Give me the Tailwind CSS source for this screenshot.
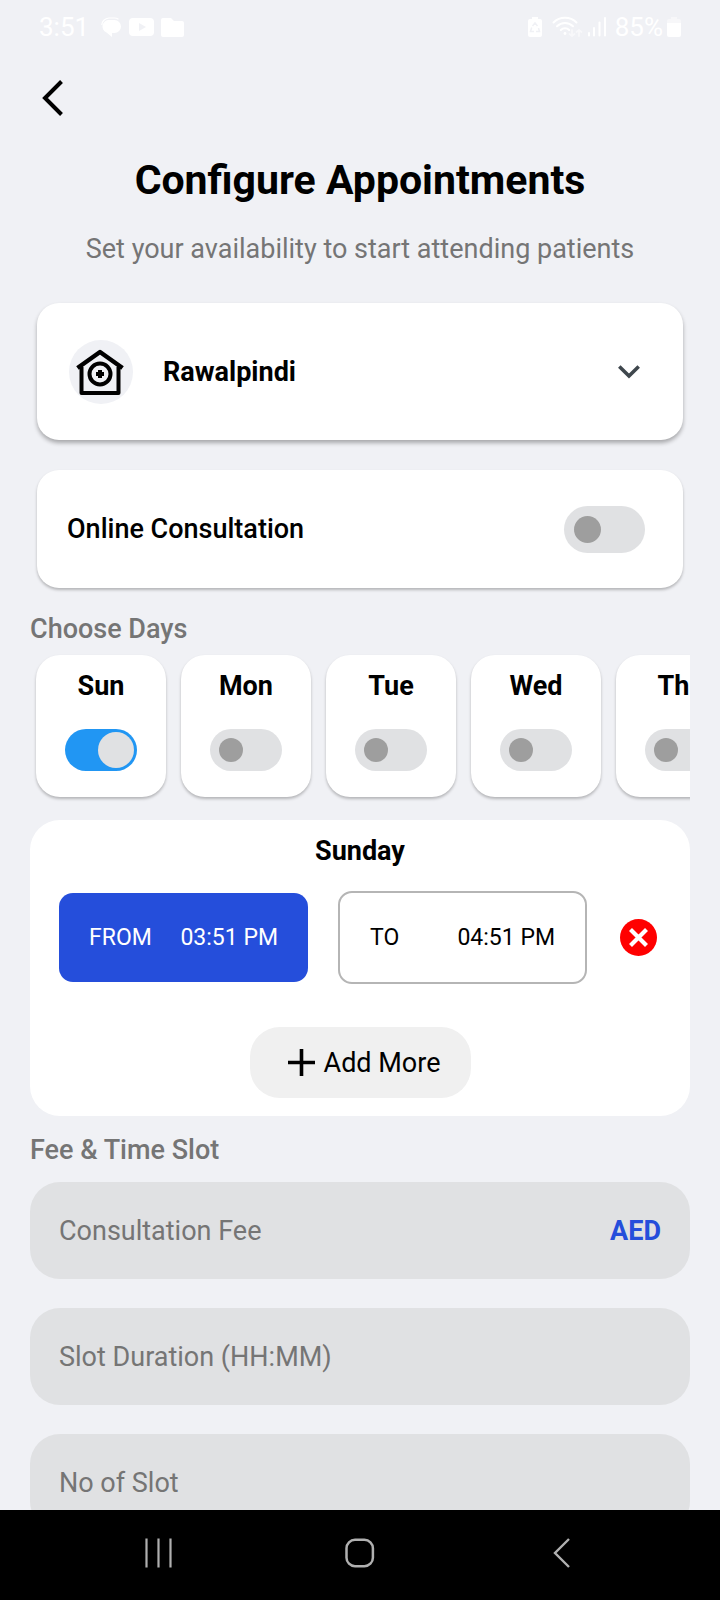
<!DOCTYPE html>
<html lang="en">
<head>
<meta charset="utf-8">
<meta name="viewport" content="width=device-width, initial-scale=1">
<title>Configure Appointments</title>
<script src="https://cdn.jsdelivr.net/npm/@tailwindcss/browser@4"></script>
</head>
<body class="flex h-screen flex-col overflow-hidden bg-[#f0f1f5] font-['Roboto',sans-serif] text-[27px] leading-8 text-black">

<header class="flex h-[54px] shrink-0 items-center justify-between px-[39px] text-[26px] text-white">
  <div class="flex items-center gap-[7px]">
    <span class="mr-[5px]">3:51</span>
    <svg class="h-5 w-[21px]" viewBox="0 0 21 20" aria-hidden="true"><path d="M8.500 3h5a6.500 6.500 0 0 1 0 13H11v4l-5.500-4.500A6.500 6.500 0 0 1 8.500 3z" fill="currentColor"/><path d="M.8 8A8 7 0 0 1 8 1h5a8 8 0 0 1 4.500 1.200" fill="none" stroke="currentColor" stroke-width="1.200"/></svg>
    <svg class="h-[18px] w-[25px]" viewBox="0 0 25 18" aria-hidden="true"><rect width="25" height="18" rx="4" fill="currentColor"/><path d="M10 5l7 4-7 4z" fill="#f0f1f5"/></svg>
    <svg class="h-[19px] w-[23px]" viewBox="0 0 23 19" aria-hidden="true"><path d="M2 0h8l3 3h8a2 2 0 0 1 2 2v12a2 2 0 0 1-2 2H2a2 2 0 0 1-2-2V2a2 2 0 0 1 2-2z" fill="currentColor"/></svg>
  </div>
  <div class="flex items-center">
    <svg class="mr-[10px] h-5 w-[14px]" viewBox="0 0 14 20" aria-hidden="true"><path d="M4 0h6v2h2a2 2 0 0 1 2 2v14a2 2 0 0 1-2 2H2a2 2 0 0 1-2-2V4a2 2 0 0 1 2-2h2z" fill="currentColor"/><path d="M4.500 9L7 6l2.500 3M10.500 11l1 3.500H8M6 14.500H2.500l1.200-4" fill="none" stroke="#f0f1f5" stroke-width="1.500"/></svg>
    <svg class="mr-[5px] h-[22px] w-[31px]" viewBox="0 0 31 22" fill="none" stroke="currentColor" stroke-width="2" stroke-linecap="round" aria-hidden="true"><path d="M1.500 6.500a16.500 16.500 0 0 1 23 0M5 10.200a11.500 11.500 0 0 1 16 0M8.800 14a6 6 0 0 1 8.400 0"/><circle cx="13" cy="17.500" r="1.400" fill="currentColor" stroke="none"/><g opacity=".5" stroke-width="1.800"><path d="M20 14v6M17.500 18l2.500 2 2.500-2M27 20v-6M24.500 16l2.500-2 2.500 2"/></g></svg>
    <svg class="mr-[9px] h-5 w-[18px]" viewBox="0 0 18 20" fill="currentColor" aria-hidden="true"><rect y="15" width="2" height="4.500" rx="1"/><rect x="5" y="10" width="2" height="9.500" rx="1"/><rect x="10.500" y="4.500" width="2" height="15" rx="1"/><rect x="16" width="2" height="19.500" rx="1"/></svg>
    <span class="mr-1">85%</span>
    <svg class="h-5 w-[14px]" viewBox="0 0 14 20" fill="currentColor" aria-hidden="true"><path d="M4 0h6v2h2a2 2 0 0 1 2 2v2H0V4a2 2 0 0 1 2-2h2z" opacity=".45"/><path d="M0 6h14v12a2 2 0 0 1-2 2H2a2 2 0 0 1-2-2z"/></svg>
  </div>
</header>

<main class="min-h-0 flex-1 overflow-hidden px-[30px]">
  <button type="button" aria-label="Back" class="ml-2 flex h-[87px] w-9 items-center pl-1">
    <svg class="h-9 w-[22px]" viewBox="0 0 22 36" fill="none" stroke="#000" stroke-width="4" aria-hidden="true"><path d="M19.500 1.500L3 18l16.500 16.500"/></svg>
  </button>
  <h1 class="mt-[15px] text-center text-[41px] leading-[48px] font-bold">Configure Appointments</h1>
  <p class="mt-[29px] text-center text-[#757575]">Set your availability to start attending patients</p>

  <label class="mx-[7px] mt-[38px] flex h-[137px] items-center rounded-[22px] bg-white pr-[43px] pl-8 shadow-[0_3px_4px_rgba(0,0,0,0.3)]">
    <span class="flex size-16 shrink-0 items-center justify-center rounded-full bg-[#f0f1f5]">
      <svg class="size-[50px]" viewBox="0 0 50 50" fill="none" stroke="#000" stroke-width="4" aria-hidden="true"><path d="M1.500 21L24 5l22.500 16" stroke-width="4.500" stroke-linejoin="round"/><path d="M5.500 20v26h37V20" stroke-linejoin="round"/><circle cx="24" cy="27" r="10.500"/><path d="M24 23v8M20 27h8"/></svg>
    </span>
    <select aria-label="City" class="ml-[30px] h-16 min-w-0 flex-1 appearance-none bg-white font-bold outline-none"><option>Rawalpindi</option></select>
    <svg class="h-[14px] w-[22px] shrink-0" viewBox="0 0 22 14" fill="none" stroke="#3f474d" stroke-width="3.600" aria-hidden="true"><path d="M1.300 1.500L11 11 20.700 1.500"/></svg>
  </label>

  <label class="mx-[7px] mt-[30px] flex h-[118px] items-center justify-between rounded-[22px] bg-white pr-[38px] pl-[30px] font-medium shadow-[0_2px_3px_rgba(0,0,0,0.25)]">
    Online Consultation
    <input type="checkbox" role="switch" class="flex h-[47px] w-[81px] appearance-none items-center rounded-full bg-[#e0e1e3] pl-[10px] before:size-[27px] before:rounded-full before:bg-[#9e9e9e] before:content-[''] checked:bg-[#2196f3] checked:pl-[44px]">
  </label>

  <h2 class="mt-[25px] font-medium text-[#757575]">Choose Days</h2>
  <div class="mt-2 flex gap-[15px] overflow-hidden pt-[2px] pb-2 pl-[6px] font-bold">
    <label class="flex h-[142px] w-[130px] shrink-0 flex-col items-center justify-between rounded-3xl bg-white pt-[15px] pb-[26px] shadow-[0_2px_3px_rgba(0,0,0,0.25)]">Sun<input type="checkbox" role="switch" checked class="flex h-[42px] w-[72px] appearance-none items-center rounded-full bg-[#e0e1e3] pl-[9px] before:size-6 before:rounded-full before:bg-[#9e9e9e] before:content-[''] checked:bg-[#2196f3] checked:pl-[33px] checked:before:size-9 checked:before:bg-[#e0e1e3]"></label>
    <label class="flex h-[142px] w-[130px] shrink-0 flex-col items-center justify-between rounded-3xl bg-white pt-[15px] pb-[26px] shadow-[0_2px_3px_rgba(0,0,0,0.25)]">Mon<input type="checkbox" role="switch" class="flex h-[42px] w-[72px] appearance-none items-center rounded-full bg-[#e0e1e3] pl-[9px] before:size-6 before:rounded-full before:bg-[#9e9e9e] before:content-[''] checked:bg-[#2196f3] checked:pl-[33px] checked:before:size-9 checked:before:bg-[#e0e1e3]"></label>
    <label class="flex h-[142px] w-[130px] shrink-0 flex-col items-center justify-between rounded-3xl bg-white pt-[15px] pb-[26px] shadow-[0_2px_3px_rgba(0,0,0,0.25)]">Tue<input type="checkbox" role="switch" class="flex h-[42px] w-[72px] appearance-none items-center rounded-full bg-[#e0e1e3] pl-[9px] before:size-6 before:rounded-full before:bg-[#9e9e9e] before:content-[''] checked:bg-[#2196f3] checked:pl-[33px] checked:before:size-9 checked:before:bg-[#e0e1e3]"></label>
    <label class="flex h-[142px] w-[130px] shrink-0 flex-col items-center justify-between rounded-3xl bg-white pt-[15px] pb-[26px] shadow-[0_2px_3px_rgba(0,0,0,0.25)]">Wed<input type="checkbox" role="switch" class="flex h-[42px] w-[72px] appearance-none items-center rounded-full bg-[#e0e1e3] pl-[9px] before:size-6 before:rounded-full before:bg-[#9e9e9e] before:content-[''] checked:bg-[#2196f3] checked:pl-[33px] checked:before:size-9 checked:before:bg-[#e0e1e3]"></label>
    <label class="flex h-[142px] w-[130px] shrink-0 flex-col items-center justify-between rounded-3xl bg-white pt-[15px] pb-[26px] shadow-[0_2px_3px_rgba(0,0,0,0.25)]">Thu<input type="checkbox" role="switch" class="flex h-[42px] w-[72px] appearance-none items-center rounded-full bg-[#e0e1e3] pl-[9px] before:size-6 before:rounded-full before:bg-[#9e9e9e] before:content-[''] checked:bg-[#2196f3] checked:pl-[33px] checked:before:size-9 checked:before:bg-[#e0e1e3]"></label>
  </div>

  <section class="mt-[15px] flex flex-col items-center rounded-[30px] bg-white px-[29px] pt-[15px] pb-[18px]">
    <h3 class="font-bold">Sunday</h3>
    <div class="mt-6 grid w-full grid-cols-[1fr_1fr_auto] items-center gap-x-[30px] text-[23px]">
      <button type="button" class="flex h-[89px] items-center justify-between rounded-[14px] bg-[#254edb] px-[30px] text-white"><span>FROM</span><span>03:51 PM</span></button>
      <button type="button" class="flex h-[93px] items-center justify-between rounded-[14px] border-2 border-[#b5b5b5] px-[30px]"><span>TO</span><span>04:51 PM</span></button>
      <button type="button" aria-label="Remove time" class="pr-1 pl-[3px]">
        <svg class="size-[37px]" viewBox="0 0 37 37" aria-hidden="true"><circle cx="18.500" cy="18.500" r="18.500" fill="#f00"/><path d="M10.500 10.500l16 16M26.500 10.500l-16 16" stroke="#fff" stroke-width="4.200"/></svg>
      </button>
    </div>
    <button type="button" class="mt-[43px] flex h-[71px] w-[221px] items-center justify-center gap-[9px] rounded-[30px] bg-[#f0f0f0] pl-2">
      <svg class="size-[27px]" viewBox="0 0 27 27" stroke="#000" stroke-width="3.600" aria-hidden="true"><path d="M13.500 0v27M0 13.500h27"/></svg>
      Add More
    </button>
  </section>

  <h2 class="mt-[18px] font-medium text-[#757575]">Fee &amp; Time Slot</h2>
  <div class="mt-4 flex flex-col gap-[29px]">
    <label class="flex h-[97px] items-center rounded-[30px] bg-[#e0e1e3] px-[29px]">
      <input type="text" aria-label="Consultation Fee" placeholder="Consultation Fee" class="min-w-0 flex-1 outline-none placeholder:text-[#757575]">
      <span class="font-bold text-[#254edb]">AED</span>
    </label>
    <input type="text" aria-label="Slot Duration (HH:MM)" placeholder="Slot Duration (HH:MM)" class="h-[97px] w-full rounded-[30px] bg-[#e0e1e3] px-[29px] outline-none placeholder:text-[#757575]">
    <input type="text" aria-label="No of Slot" placeholder="No of Slot" class="h-[97px] w-full rounded-[30px] bg-[#e0e1e3] px-[29px] outline-none placeholder:text-[#757575]">
  </div>
</main>

<nav aria-label="System" class="flex h-[90px] shrink-0 items-center justify-around bg-black px-[58px] pb-1">
  <button type="button" aria-label="Recent apps"><svg class="size-[30px]" viewBox="0 0 30 30" fill="none" stroke="#b0b0b0" stroke-width="2.200" aria-hidden="true"><path d="M2.500 .5v29M14.500 .5v29M26.500 .5v29"/></svg></button>
  <button type="button" aria-label="Home"><svg class="size-[30px]" viewBox="0 0 30 30" fill="none" stroke="#b0b0b0" stroke-width="2.500" aria-hidden="true"><rect x="1.500" y="1.800" width="26.400" height="26.400" rx="8.500"/></svg></button>
  <button type="button" aria-label="Back"><svg class="size-[30px]" viewBox="0 0 30 30" fill="none" stroke="#b0b0b0" stroke-width="2.400" aria-hidden="true"><path d="M23 1L9 15l14 14"/></svg></button>
</nav>
</body>
</html>
